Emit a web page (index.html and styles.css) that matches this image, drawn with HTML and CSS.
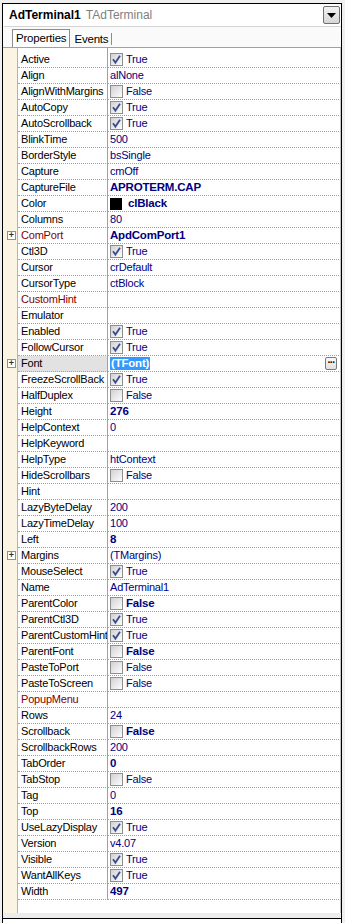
FILE: index.html
```html
<!DOCTYPE html>
<html>
<head>
<meta charset="utf-8">
<link rel="stylesheet" href="styles.css">
</head>
<body>
<div class="frame">
  <div class="header">
    <span class="obj">AdTerminal1</span><span class="cls">TAdTerminal</span>
    <span class="drop"><svg width="9" height="5" viewBox="0 0 9 5"><path d="M0 0H9L4.5 5Z" fill="#000"/></svg></span>
  </div>
  <div class="tabs">
    <span class="tab active">Properties</span><span class="tab">Events</span>
  </div>
  <div class="grid">
    <div class="row spacer"><div class="g"></div><div class="n"></div><div class="v"></div></div>

    <div class="row"><div class="g"></div><div class="n">Active</div><div class="v"><span class="cb on"><svg viewBox="0 0 11 11"><path d="M2 5.2L4.4 8.6L9 1.8"/></svg></span>True</div></div>
    <div class="row"><div class="g"></div><div class="n">Align</div><div class="v">alNone</div></div>
    <div class="row"><div class="g"></div><div class="n">AlignWithMargins</div><div class="v"><span class="cb"></span>False</div></div>
    <div class="row"><div class="g"></div><div class="n">AutoCopy</div><div class="v"><span class="cb on"><svg viewBox="0 0 11 11"><path d="M2 5.2L4.4 8.6L9 1.8"/></svg></span>True</div></div>
    <div class="row"><div class="g"></div><div class="n">AutoScrollback</div><div class="v"><span class="cb on"><svg viewBox="0 0 11 11"><path d="M2 5.2L4.4 8.6L9 1.8"/></svg></span>True</div></div>
    <div class="row"><div class="g"></div><div class="n">BlinkTime</div><div class="v">500</div></div>
    <div class="row"><div class="g"></div><div class="n">BorderStyle</div><div class="v">bsSingle</div></div>
    <div class="row"><div class="g"></div><div class="n">Capture</div><div class="v">cmOff</div></div>
    <div class="row"><div class="g"></div><div class="n">CaptureFile</div><div class="v b">APROTERM.CAP</div></div>
    <div class="row"><div class="g"></div><div class="n">Color</div><div class="v b"><span class="swatch"></span>clBlack</div></div>
    <div class="row"><div class="g"></div><div class="n">Columns</div><div class="v">80</div></div>
    <div class="row"><div class="g"><span class="exp">+</span></div><div class="n red">ComPort</div><div class="v b">ApdComPort1</div></div>
    <div class="row"><div class="g"></div><div class="n">Ctl3D</div><div class="v"><span class="cb on"><svg viewBox="0 0 11 11"><path d="M2 5.2L4.4 8.6L9 1.8"/></svg></span>True</div></div>
    <div class="row"><div class="g"></div><div class="n">Cursor</div><div class="v">crDefault</div></div>
    <div class="row"><div class="g"></div><div class="n">CursorType</div><div class="v">ctBlock</div></div>
    <div class="row"><div class="g"></div><div class="n red">CustomHint</div><div class="v"></div></div>
    <div class="row"><div class="g"></div><div class="n">Emulator</div><div class="v"></div></div>
    <div class="row"><div class="g"></div><div class="n">Enabled</div><div class="v"><span class="cb on"><svg viewBox="0 0 11 11"><path d="M2 5.2L4.4 8.6L9 1.8"/></svg></span>True</div></div>
    <div class="row"><div class="g"></div><div class="n">FollowCursor</div><div class="v"><span class="cb on"><svg viewBox="0 0 11 11"><path d="M2 5.2L4.4 8.6L9 1.8"/></svg></span>True</div></div>
    <div class="row sel"><div class="g"><span class="exp">+</span></div><div class="n">Font</div><div class="v b"><span class="hl">(TFont)</span><span class="ell">···</span></div></div>
    <div class="row"><div class="g"></div><div class="n">FreezeScrollBack</div><div class="v"><span class="cb on"><svg viewBox="0 0 11 11"><path d="M2 5.2L4.4 8.6L9 1.8"/></svg></span>True</div></div>
    <div class="row"><div class="g"></div><div class="n">HalfDuplex</div><div class="v"><span class="cb"></span>False</div></div>
    <div class="row"><div class="g"></div><div class="n">Height</div><div class="v b">276</div></div>
    <div class="row"><div class="g"></div><div class="n">HelpContext</div><div class="v">0</div></div>
    <div class="row"><div class="g"></div><div class="n">HelpKeyword</div><div class="v"></div></div>
    <div class="row"><div class="g"></div><div class="n">HelpType</div><div class="v">htContext</div></div>
    <div class="row"><div class="g"></div><div class="n">HideScrollbars</div><div class="v"><span class="cb"></span>False</div></div>
    <div class="row"><div class="g"></div><div class="n">Hint</div><div class="v"></div></div>
    <div class="row"><div class="g"></div><div class="n">LazyByteDelay</div><div class="v">200</div></div>
    <div class="row"><div class="g"></div><div class="n">LazyTimeDelay</div><div class="v">100</div></div>
    <div class="row"><div class="g"></div><div class="n">Left</div><div class="v b">8</div></div>
    <div class="row"><div class="g"><span class="exp">+</span></div><div class="n">Margins</div><div class="v">(TMargins)</div></div>
    <div class="row"><div class="g"></div><div class="n">MouseSelect</div><div class="v"><span class="cb on"><svg viewBox="0 0 11 11"><path d="M2 5.2L4.4 8.6L9 1.8"/></svg></span>True</div></div>
    <div class="row"><div class="g"></div><div class="n">Name</div><div class="v">AdTerminal1</div></div>
    <div class="row"><div class="g"></div><div class="n">ParentColor</div><div class="v b"><span class="cb"></span>False</div></div>
    <div class="row"><div class="g"></div><div class="n">ParentCtl3D</div><div class="v"><span class="cb on"><svg viewBox="0 0 11 11"><path d="M2 5.2L4.4 8.6L9 1.8"/></svg></span>True</div></div>
    <div class="row"><div class="g"></div><div class="n">ParentCustomHint</div><div class="v"><span class="cb on"><svg viewBox="0 0 11 11"><path d="M2 5.2L4.4 8.6L9 1.8"/></svg></span>True</div></div>
    <div class="row"><div class="g"></div><div class="n">ParentFont</div><div class="v b"><span class="cb"></span>False</div></div>
    <div class="row"><div class="g"></div><div class="n">PasteToPort</div><div class="v"><span class="cb"></span>False</div></div>
    <div class="row"><div class="g"></div><div class="n">PasteToScreen</div><div class="v"><span class="cb"></span>False</div></div>
    <div class="row"><div class="g"></div><div class="n red">PopupMenu</div><div class="v"></div></div>
    <div class="row"><div class="g"></div><div class="n">Rows</div><div class="v">24</div></div>
    <div class="row"><div class="g"></div><div class="n">Scrollback</div><div class="v b"><span class="cb"></span>False</div></div>
    <div class="row"><div class="g"></div><div class="n">ScrollbackRows</div><div class="v">200</div></div>
    <div class="row"><div class="g"></div><div class="n">TabOrder</div><div class="v b">0</div></div>
    <div class="row"><div class="g"></div><div class="n">TabStop</div><div class="v"><span class="cb"></span>False</div></div>
    <div class="row"><div class="g"></div><div class="n">Tag</div><div class="v">0</div></div>
    <div class="row"><div class="g"></div><div class="n">Top</div><div class="v b">16</div></div>
    <div class="row"><div class="g"></div><div class="n">UseLazyDisplay</div><div class="v"><span class="cb on"><svg viewBox="0 0 11 11"><path d="M2 5.2L4.4 8.6L9 1.8"/></svg></span>True</div></div>
    <div class="row"><div class="g"></div><div class="n">Version</div><div class="v">v4.07</div></div>
    <div class="row"><div class="g"></div><div class="n">Visible</div><div class="v"><span class="cb on"><svg viewBox="0 0 11 11"><path d="M2 5.2L4.4 8.6L9 1.8"/></svg></span>True</div></div>
    <div class="row"><div class="g"></div><div class="n">WantAllKeys</div><div class="v"><span class="cb on"><svg viewBox="0 0 11 11"><path d="M2 5.2L4.4 8.6L9 1.8"/></svg></span>True</div></div>
    <div class="row"><div class="g"></div><div class="n">Width</div><div class="v b">497</div></div>

    <div class="filler"><div class="g"></div><div class="rest"></div></div>
  </div>
  <div class="band"></div>
  <div class="status">Bring to Front&nbsp;&nbsp; Send to Back&nbsp;&nbsp; Component to Code</div>
</div>
</body>
</html>
```

FILE: styles.css
```css
html, body {
  margin: 0;
  padding: 0;
}
body {
  background: #f0f0f0;
  padding-top: 3px;
  font-family: "Liberation Sans", Arial, sans-serif;
  font-size: 11px;
  letter-spacing: -0.2px;
  color: #000;
  overflow: hidden;
  height: 923px;
  box-sizing: border-box;
}
.frame {
  margin-left: 2px;
  width: 340px;
  box-sizing: border-box;
  border: 1px solid #000;
  border-bottom: none;
  background: #fff;
  height: 930px;
}
.header {
  height: 23px;
  box-sizing: border-box;
  display: flex;
  align-items: center;
  padding-left: 5px;
  background: #fff;
  border-bottom: 1px solid #d4d4d4;
  margin-left: 1px;
}
.obj {
  font-weight: bold;
  font-size: 12px;
  letter-spacing: 0;
}
.cls {
  color: #808080;
  margin-left: 5px;
  font-size: 12px;
  letter-spacing: 0;
}
.drop {
  margin-left: auto;
  margin-right: 1px;
  width: 17px;
  height: 18px;
  box-sizing: border-box;
  border: 1px solid #707070;
  border-radius: 2px;
  background: linear-gradient(#f2f2f2, #d6d6d6);
  display: flex;
  align-items: center;
  justify-content: center;
}
.tabs {
  height: 21px;
  box-sizing: border-box;
  background: #fafafa;
  border-bottom: 1px solid #a0a0a0;
  padding-left: 9px;
  display: flex;
  align-items: flex-end;
}
.tab {
  height: 17px;
  line-height: 16px;
  padding: 0 4px 0 3px;
  font-size: 11.5px;
}
.tab.active {
  border: 1px solid #8c8c8c;
  border-bottom: none;
  background: #fff;
  padding: 0 3px 0 3px;
}
.tab + .tab {
  border-right: 1px solid #8c8c8c;
  height: 12px;
  line-height: 12px;
  margin-bottom: 2px;
  margin-left: 1px;
  padding-right: 3px;
}
.grid {
  display: flex;
  flex-direction: column;
}
.row {
  display: flex;
  height: 16px;
}
.row.spacer {
  height: 4px;
}
.row.spacer .n, .row.spacer .v {
  border-bottom: none;
}
.g {
  width: 14px;
  flex: none;
  background: #fcf4e2;
  border-right: 1px solid #b4b4b4;
  position: relative;
}
.n {
  width: 86px;
  flex: none;
  padding-left: 3px;
  border-right: 1px solid #a0a0a0;
  border-bottom: 1px dotted #a0a0a0;
  line-height: 15px;
  white-space: nowrap;
  overflow: hidden;
}
.n.red {
  color: #800000;
}
.v {
  flex: 1;
  padding-left: 2px;
  border-right: 1px solid #c8c8c8;
  border-bottom: 1px dotted #a0a0a0;
  line-height: 15px;
  color: #000080;
  display: flex;
  align-items: center;
  white-space: nowrap;
}
.v.b {
  font-weight: bold;
  font-size: 11.5px;
}
.sel .n {
  background: #e2e2e2;
}
.hl {
  background: #3399ff;
  color: #fff;
  padding: 0 1px;
  line-height: 13px;
}
.ell {
  margin-left: auto;
  margin-right: 3px;
  width: 12px;
  height: 13px;
  box-sizing: border-box;
  border: 1px solid #7a7a7a;
  border-radius: 2px;
  background: linear-gradient(#fafafa, #e0e0e0);
  color: #000;
  font-size: 10px;
  line-height: 9px;
  text-align: center;
  letter-spacing: -1px;
}
.cb {
  width: 13px;
  height: 13px;
  box-sizing: border-box;
  border: 1px solid #8e8f8f;
  background: linear-gradient(135deg, #d2d2d2, #f4f4f4 80%, #fff);
  margin-right: 3px;
  display: flex;
  align-items: center;
  justify-content: center;
  font-weight: normal;
}
.cb svg {
  width: 11px;
  height: 11px;
}
.cb path {
  fill: none;
  stroke: #3c4d8c;
  stroke-width: 1.8;
}
.swatch {
  width: 12px;
  height: 12px;
  background: #000;
  margin-right: 6px;
}
.exp {
  position: absolute;
  left: 4px;
  top: 3px;
  width: 9px;
  height: 9px;
  box-sizing: border-box;
  border: 1px solid #919191;
  background: #fff;
  font-size: 9px;
  line-height: 7px;
  text-align: center;
  color: #333;
  font-weight: bold;
  letter-spacing: 0;
}
.filler {
  display: flex;
  height: 13px;
}
.filler .rest {
  flex: 1;
  background: #fff;
  border-right: 1px solid #c8c8c8;
}
.band {
  height: 5px;
  background: #ececec;
}
.status {
  border-top: 1px solid #000;
  padding: 2px 0 0 3px;
  height: 20px;
  font-size: 11px;
  line-height: 12px;
  background: #fff;
}
```
